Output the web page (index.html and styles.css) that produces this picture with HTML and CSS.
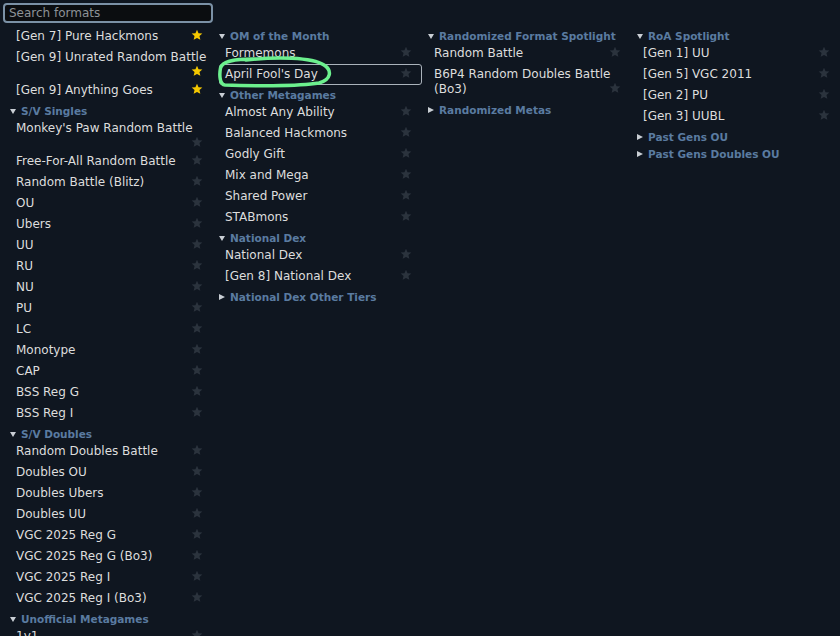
FILE: index.html
```html
<!doctype html>
<html>
<head>
	<meta charset='utf-8'>
	<title>Format list</title>

	<link rel="stylesheet" href="styles.css">
</head>
<body>

	<input class='search' type='text' placeholder='Search formats'>

	<div class='format-list'>

		<div class='column'>
			<button class='option'>[Gen 7] Pure Hackmons<span class='star fav'><svg viewBox='0 0 24 24'><path d='M12 1.5l3.1 7 7.6.7-5.8 5 1.8 7.5L12 17.8l-6.7 3.9 1.8-7.5-5.8-5 7.6-.7z'/></svg></span></button>
			<button class='option'>[Gen 9] Unrated Random Battle<span class='star fav'><svg viewBox='0 0 24 24'><path d='M12 1.5l3.1 7 7.6.7-5.8 5 1.8 7.5L12 17.8l-6.7 3.9 1.8-7.5-5.8-5 7.6-.7z'/></svg></span></button>
			<button class='option'>[Gen 9] Anything Goes<span class='star fav'><svg viewBox='0 0 24 24'><path d='M12 1.5l3.1 7 7.6.7-5.8 5 1.8 7.5L12 17.8l-6.7 3.9 1.8-7.5-5.8-5 7.6-.7z'/></svg></span></button>

			<h3 class='group open'><i class='arrow'></i>S/V Singles</h3>
			<button class='option'>Monkey's Paw Random Battle<span class='star'><svg viewBox='0 0 24 24'><path d='M12 1.5l3.1 7 7.6.7-5.8 5 1.8 7.5L12 17.8l-6.7 3.9 1.8-7.5-5.8-5 7.6-.7z'/></svg></span></button>
			<button class='option'>Free-For-All Random Battle<span class='star'><svg viewBox='0 0 24 24'><path d='M12 1.5l3.1 7 7.6.7-5.8 5 1.8 7.5L12 17.8l-6.7 3.9 1.8-7.5-5.8-5 7.6-.7z'/></svg></span></button>
			<button class='option'>Random Battle (Blitz)<span class='star'><svg viewBox='0 0 24 24'><path d='M12 1.5l3.1 7 7.6.7-5.8 5 1.8 7.5L12 17.8l-6.7 3.9 1.8-7.5-5.8-5 7.6-.7z'/></svg></span></button>
			<button class='option'>OU<span class='star'><svg viewBox='0 0 24 24'><path d='M12 1.5l3.1 7 7.6.7-5.8 5 1.8 7.5L12 17.8l-6.7 3.9 1.8-7.5-5.8-5 7.6-.7z'/></svg></span></button>
			<button class='option'>Ubers<span class='star'><svg viewBox='0 0 24 24'><path d='M12 1.5l3.1 7 7.6.7-5.8 5 1.8 7.5L12 17.8l-6.7 3.9 1.8-7.5-5.8-5 7.6-.7z'/></svg></span></button>
			<button class='option'>UU<span class='star'><svg viewBox='0 0 24 24'><path d='M12 1.5l3.1 7 7.6.7-5.8 5 1.8 7.5L12 17.8l-6.7 3.9 1.8-7.5-5.8-5 7.6-.7z'/></svg></span></button>
			<button class='option'>RU<span class='star'><svg viewBox='0 0 24 24'><path d='M12 1.5l3.1 7 7.6.7-5.8 5 1.8 7.5L12 17.8l-6.7 3.9 1.8-7.5-5.8-5 7.6-.7z'/></svg></span></button>
			<button class='option'>NU<span class='star'><svg viewBox='0 0 24 24'><path d='M12 1.5l3.1 7 7.6.7-5.8 5 1.8 7.5L12 17.8l-6.7 3.9 1.8-7.5-5.8-5 7.6-.7z'/></svg></span></button>
			<button class='option'>PU<span class='star'><svg viewBox='0 0 24 24'><path d='M12 1.5l3.1 7 7.6.7-5.8 5 1.8 7.5L12 17.8l-6.7 3.9 1.8-7.5-5.8-5 7.6-.7z'/></svg></span></button>
			<button class='option'>LC<span class='star'><svg viewBox='0 0 24 24'><path d='M12 1.5l3.1 7 7.6.7-5.8 5 1.8 7.5L12 17.8l-6.7 3.9 1.8-7.5-5.8-5 7.6-.7z'/></svg></span></button>
			<button class='option'>Monotype<span class='star'><svg viewBox='0 0 24 24'><path d='M12 1.5l3.1 7 7.6.7-5.8 5 1.8 7.5L12 17.8l-6.7 3.9 1.8-7.5-5.8-5 7.6-.7z'/></svg></span></button>
			<button class='option'>CAP<span class='star'><svg viewBox='0 0 24 24'><path d='M12 1.5l3.1 7 7.6.7-5.8 5 1.8 7.5L12 17.8l-6.7 3.9 1.8-7.5-5.8-5 7.6-.7z'/></svg></span></button>
			<button class='option'>BSS Reg G<span class='star'><svg viewBox='0 0 24 24'><path d='M12 1.5l3.1 7 7.6.7-5.8 5 1.8 7.5L12 17.8l-6.7 3.9 1.8-7.5-5.8-5 7.6-.7z'/></svg></span></button>
			<button class='option'>BSS Reg I<span class='star'><svg viewBox='0 0 24 24'><path d='M12 1.5l3.1 7 7.6.7-5.8 5 1.8 7.5L12 17.8l-6.7 3.9 1.8-7.5-5.8-5 7.6-.7z'/></svg></span></button>

			<h3 class='group open'><i class='arrow'></i>S/V Doubles</h3>
			<button class='option'>Random Doubles Battle<span class='star'><svg viewBox='0 0 24 24'><path d='M12 1.5l3.1 7 7.6.7-5.8 5 1.8 7.5L12 17.8l-6.7 3.9 1.8-7.5-5.8-5 7.6-.7z'/></svg></span></button>
			<button class='option'>Doubles OU<span class='star'><svg viewBox='0 0 24 24'><path d='M12 1.5l3.1 7 7.6.7-5.8 5 1.8 7.5L12 17.8l-6.7 3.9 1.8-7.5-5.8-5 7.6-.7z'/></svg></span></button>
			<button class='option'>Doubles Ubers<span class='star'><svg viewBox='0 0 24 24'><path d='M12 1.5l3.1 7 7.6.7-5.8 5 1.8 7.5L12 17.8l-6.7 3.9 1.8-7.5-5.8-5 7.6-.7z'/></svg></span></button>
			<button class='option'>Doubles UU<span class='star'><svg viewBox='0 0 24 24'><path d='M12 1.5l3.1 7 7.6.7-5.8 5 1.8 7.5L12 17.8l-6.7 3.9 1.8-7.5-5.8-5 7.6-.7z'/></svg></span></button>
			<button class='option'>VGC 2025 Reg G<span class='star'><svg viewBox='0 0 24 24'><path d='M12 1.5l3.1 7 7.6.7-5.8 5 1.8 7.5L12 17.8l-6.7 3.9 1.8-7.5-5.8-5 7.6-.7z'/></svg></span></button>
			<button class='option'>VGC 2025 Reg G (Bo3)<span class='star'><svg viewBox='0 0 24 24'><path d='M12 1.5l3.1 7 7.6.7-5.8 5 1.8 7.5L12 17.8l-6.7 3.9 1.8-7.5-5.8-5 7.6-.7z'/></svg></span></button>
			<button class='option'>VGC 2025 Reg I<span class='star'><svg viewBox='0 0 24 24'><path d='M12 1.5l3.1 7 7.6.7-5.8 5 1.8 7.5L12 17.8l-6.7 3.9 1.8-7.5-5.8-5 7.6-.7z'/></svg></span></button>
			<button class='option'>VGC 2025 Reg I (Bo3)<span class='star'><svg viewBox='0 0 24 24'><path d='M12 1.5l3.1 7 7.6.7-5.8 5 1.8 7.5L12 17.8l-6.7 3.9 1.8-7.5-5.8-5 7.6-.7z'/></svg></span></button>

			<h3 class='group open'><i class='arrow'></i>Unofficial Metagames</h3>
			<button class='option'>1v1<span class='star'><svg viewBox='0 0 24 24'><path d='M12 1.5l3.1 7 7.6.7-5.8 5 1.8 7.5L12 17.8l-6.7 3.9 1.8-7.5-5.8-5 7.6-.7z'/></svg></span></button>
		</div>

		<div class='column'>
			<h3 class='group open'><i class='arrow'></i>OM of the Month</h3>
			<button class='option'>Formemons<span class='star'><svg viewBox='0 0 24 24'><path d='M12 1.5l3.1 7 7.6.7-5.8 5 1.8 7.5L12 17.8l-6.7 3.9 1.8-7.5-5.8-5 7.6-.7z'/></svg></span></button>
			<button class='option selected'>April Fool's Day<span class='star'><svg viewBox='0 0 24 24'><path d='M12 1.5l3.1 7 7.6.7-5.8 5 1.8 7.5L12 17.8l-6.7 3.9 1.8-7.5-5.8-5 7.6-.7z'/></svg></span>
				<!-- hand drawn mark around the chosen format -->
				<svg class='scribble' width='120' height='36' viewBox='0 0 120 36'><path d='M30 5C60 1.5 96 2 108 10C116.5 15.5 115 25 103 28C82 31.5 32 31 9 30C4 29.5 3 21 4.5 13C6 7 14 3.5 42 4'/></svg>
			</button>

			<h3 class='group open'><i class='arrow'></i>Other Metagames</h3>
			<button class='option'>Almost Any Ability<span class='star'><svg viewBox='0 0 24 24'><path d='M12 1.5l3.1 7 7.6.7-5.8 5 1.8 7.5L12 17.8l-6.7 3.9 1.8-7.5-5.8-5 7.6-.7z'/></svg></span></button>
			<button class='option'>Balanced Hackmons<span class='star'><svg viewBox='0 0 24 24'><path d='M12 1.5l3.1 7 7.6.7-5.8 5 1.8 7.5L12 17.8l-6.7 3.9 1.8-7.5-5.8-5 7.6-.7z'/></svg></span></button>
			<button class='option'>Godly Gift<span class='star'><svg viewBox='0 0 24 24'><path d='M12 1.5l3.1 7 7.6.7-5.8 5 1.8 7.5L12 17.8l-6.7 3.9 1.8-7.5-5.8-5 7.6-.7z'/></svg></span></button>
			<button class='option'>Mix and Mega<span class='star'><svg viewBox='0 0 24 24'><path d='M12 1.5l3.1 7 7.6.7-5.8 5 1.8 7.5L12 17.8l-6.7 3.9 1.8-7.5-5.8-5 7.6-.7z'/></svg></span></button>
			<button class='option'>Shared Power<span class='star'><svg viewBox='0 0 24 24'><path d='M12 1.5l3.1 7 7.6.7-5.8 5 1.8 7.5L12 17.8l-6.7 3.9 1.8-7.5-5.8-5 7.6-.7z'/></svg></span></button>
			<button class='option'>STABmons<span class='star'><svg viewBox='0 0 24 24'><path d='M12 1.5l3.1 7 7.6.7-5.8 5 1.8 7.5L12 17.8l-6.7 3.9 1.8-7.5-5.8-5 7.6-.7z'/></svg></span></button>

			<h3 class='group open'><i class='arrow'></i>National Dex</h3>
			<button class='option'>National Dex<span class='star'><svg viewBox='0 0 24 24'><path d='M12 1.5l3.1 7 7.6.7-5.8 5 1.8 7.5L12 17.8l-6.7 3.9 1.8-7.5-5.8-5 7.6-.7z'/></svg></span></button>
			<button class='option'>[Gen 8] National Dex<span class='star'><svg viewBox='0 0 24 24'><path d='M12 1.5l3.1 7 7.6.7-5.8 5 1.8 7.5L12 17.8l-6.7 3.9 1.8-7.5-5.8-5 7.6-.7z'/></svg></span></button>

			<h3 class='group'><i class='arrow'></i>National Dex Other Tiers</h3>
		</div>

		<div class='column'>
			<h3 class='group open'><i class='arrow'></i>Randomized Format Spotlight</h3>
			<button class='option'>Random Battle<span class='star'><svg viewBox='0 0 24 24'><path d='M12 1.5l3.1 7 7.6.7-5.8 5 1.8 7.5L12 17.8l-6.7 3.9 1.8-7.5-5.8-5 7.6-.7z'/></svg></span></button>
			<button class='option'>B6P4 Random Doubles Battle (Bo3)<span class='star'><svg viewBox='0 0 24 24'><path d='M12 1.5l3.1 7 7.6.7-5.8 5 1.8 7.5L12 17.8l-6.7 3.9 1.8-7.5-5.8-5 7.6-.7z'/></svg></span></button>

			<h3 class='group'><i class='arrow'></i>Randomized Metas</h3>
		</div>

		<div class='column'>
			<h3 class='group open'><i class='arrow'></i>RoA Spotlight</h3>
			<button class='option'>[Gen 1] UU<span class='star'><svg viewBox='0 0 24 24'><path d='M12 1.5l3.1 7 7.6.7-5.8 5 1.8 7.5L12 17.8l-6.7 3.9 1.8-7.5-5.8-5 7.6-.7z'/></svg></span></button>
			<button class='option'>[Gen 5] VGC 2011<span class='star'><svg viewBox='0 0 24 24'><path d='M12 1.5l3.1 7 7.6.7-5.8 5 1.8 7.5L12 17.8l-6.7 3.9 1.8-7.5-5.8-5 7.6-.7z'/></svg></span></button>
			<button class='option'>[Gen 2] PU<span class='star'><svg viewBox='0 0 24 24'><path d='M12 1.5l3.1 7 7.6.7-5.8 5 1.8 7.5L12 17.8l-6.7 3.9 1.8-7.5-5.8-5 7.6-.7z'/></svg></span></button>
			<button class='option'>[Gen 3] UUBL<span class='star'><svg viewBox='0 0 24 24'><path d='M12 1.5l3.1 7 7.6.7-5.8 5 1.8 7.5L12 17.8l-6.7 3.9 1.8-7.5-5.8-5 7.6-.7z'/></svg></span></button>

			<h3 class='group'><i class='arrow'></i>Past Gens OU</h3>
			<h3 class='group'><i class='arrow'></i>Past Gens Doubles OU</h3>
		</div>

	</div>

</body>
</html>
```

FILE: styles.css
```css
body {
	margin: 0;
	height: 636px;
	overflow: hidden;
	background: #0f1620;
	color: #dddddd;
	font-family: "DejaVu Sans", Verdana, sans-serif;
	font-size: 12px;
}

/* search box above the list */
.search {
	display: block;
	box-sizing: border-box;
	width: 210px;
	height: 20px;
	margin: 3px 0 0 3px;
	padding: 0 4px;
	border: 2px solid #7b91a6;
	border-radius: 4px;
	background: #0b0d10;
	color: #dddddd;
	font-family: inherit;
	font-size: 12px;
	outline: none;
}

.search::placeholder {
	color: #8d9297;
}

/* four fixed columns, like the format picker */
.format-list {
	display: grid;
	grid-template-columns: repeat(4, 203px);
	column-gap: 6px;
	align-items: start;
	padding: 2.5px 0 0 10px;
}

/* group headers */
.group {
	display: flex;
	align-items: center;
	margin: 0;
	padding-top: 4px;
	line-height: 13px;
	font-size: 10.5px;
	font-weight: bold;
	color: #5a7ba0;
	white-space: nowrap;
}

.group .arrow {
	display: inline-block;
	width: 0;
	height: 0;
	margin-right: 5px;
	border-top: 3px solid transparent;
	border-bottom: 3px solid transparent;
	border-left: 6px solid #c9ced4;
}

.group.open .arrow {
	border-left: 3px solid transparent;
	border-right: 3px solid transparent;
	border-top: 5px solid #c9ced4;
	border-bottom: 0;
}

/* one format */
.option {
	display: block;
	position: relative;
	width: 100%;
	margin: 0;
	padding: 2px 3px 2px 5px;
	border: 1px solid transparent;
	border-radius: 3px;
	background: none;
	color: #dddddd;
	font-family: inherit;
	font-size: 12px;
	line-height: 15px;
	text-align: left;
}

.option.selected {
	border-color: #aab2bb;
}

/* the star drops onto its own line when the name is too long */
.star {
	float: right;
	width: 12px;
	height: 12px;
	margin-right: 6px;
}

.star svg {
	display: block;
	width: 12px;
	height: 12px;
	fill: #2b333d;
}

.star.fav svg {
	fill: #f5c800;
}

.scribble {
	position: absolute;
	left: -4px;
	top: -10px;
	overflow: visible;
	pointer-events: none;
}

.scribble path {
	fill: none;
	stroke: #6cf08e;
	stroke-width: 3.5;
	stroke-linecap: round;
	stroke-linejoin: round;
}
```
